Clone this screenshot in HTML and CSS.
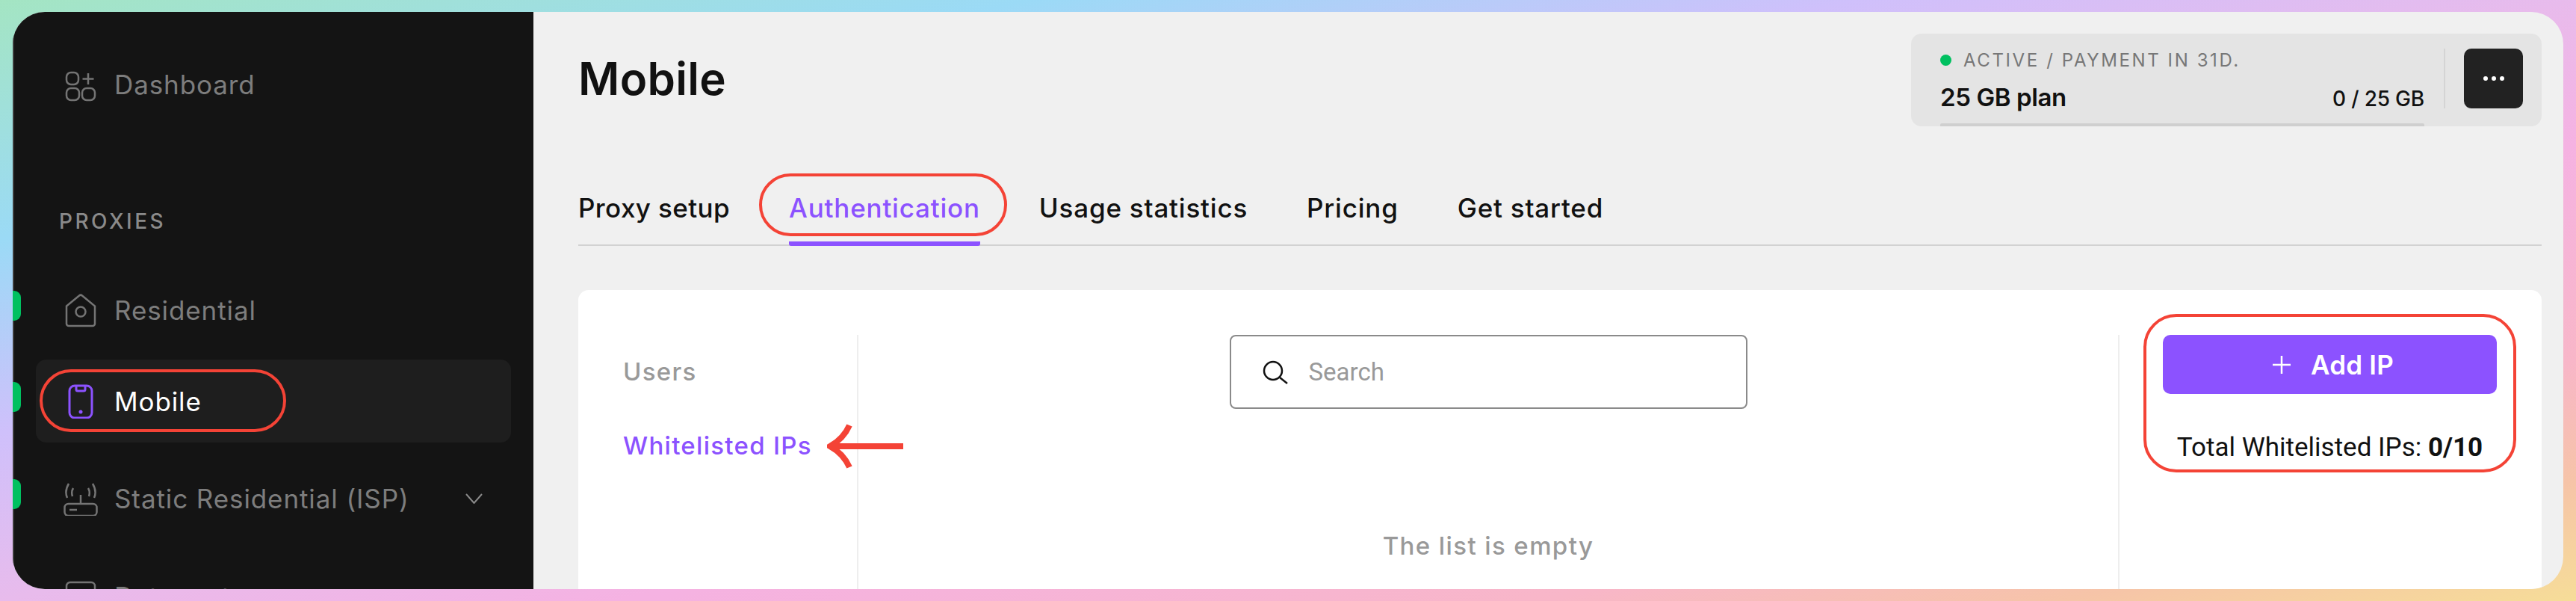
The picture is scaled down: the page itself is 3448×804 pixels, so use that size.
FILE: index.html
```html
<!DOCTYPE html>
<html lang="en">
<head>
    <meta charset="UTF-8">
    <title>Mobile</title>
    <link rel="stylesheet" href="styles.css">
</head>
<body>
    <div class="frame">
        <div class="app">
            <aside class="sidebar">
                <a class="nav-item nav-first">
                    <svg class="nav-icon" viewBox="0 0 46 46"><rect x="4" y="7" width="16" height="16" rx="6"/><path d="M33 8V23M25.500 15.500H40.500"/><rect x="4" y="28" width="17" height="16" rx="6"/><rect x="25" y="28" width="17" height="16" rx="6"/></svg>
                    <span>Dashboard</span>
                </a>
                <div class="nav-heading">PROXIES</div>
                <a class="nav-item">
                    <span class="nav-mark"></span>
                    <svg class="nav-icon" viewBox="0 0 46 46"><path d="M4 17.500L21 3.500a3 3 0 0 1 4 0L42 17.500V41a3 3 0 0 1-3 3H7a3 3 0 0 1-3-3Z"/><circle cx="23" cy="25" r="6.500"/></svg>
                    <span>Residential</span>
                </a>
                <a class="nav-item nav-active">
                    <span class="nav-mark"></span>
                    <svg class="nav-icon" viewBox="0 0 46 46"><rect x="8" y="2" width="30" height="43" rx="7"/><path d="M17 2V7a2 2 0 0 0 2 2H27a2 2 0 0 0 2-2V2"/><circle class="icon-dot" cx="23" cy="37" r="2.500"/></svg>
                    <span>Mobile</span>
                    <span class="ring ring-nav"></span>
                </a>
                <a class="nav-item nav-isp">
                    <span class="nav-mark"></span>
                    <svg class="nav-icon" viewBox="0 0 46 46"><rect x="1.500" y="30" width="43" height="16" rx="5"/><path d="M8 38H18M23 18V30M7 3Q1 13 5 22M39 3Q45 13 41 22M13 9Q10 14 12 20M33 9Q36 14 34 20"/></svg>
                    <span>Static Residential (ISP)</span>
                    <svg class="nav-chevron" viewBox="0 0 23 14"><path d="M1 1L11.500 13L22 1"/></svg>
                </a>
                <a class="nav-item nav-last">
                    <svg class="nav-icon" viewBox="0 0 46 46"><rect x="4" y="4" width="38" height="38" rx="5"/></svg>
                    <span>Datacenter</span>
                </a>
            </aside>

            <main class="main">
                <header class="page-header">
                    <h1>Mobile</h1>
                    <div class="plan-card">
                        <div class="plan-info">
                            <div class="plan-status"><span class="status-dot"></span>ACTIVE / PAYMENT IN 31D.</div>
                            <div class="plan-row">
                                <span class="plan-name">25 GB plan</span>
                                <span class="plan-usage">0 / 25 GB</span>
                            </div>
                            <div class="plan-bar"></div>
                        </div>
                        <span class="plan-divider"></span>
                        <button class="plan-more"><i></i><i></i><i></i></button>
                    </div>
                </header>

                <nav class="tabs">
                    <a class="tab">Proxy setup</a>
                    <a class="tab tab-active">Authentication<span class="ring ring-tab"></span></a>
                    <a class="tab">Usage statistics</a>
                    <a class="tab">Pricing</a>
                    <a class="tab">Get started</a>
                </nav>

                <section class="card">
                    <div class="card-menu">
                        <a class="menu-link">Users</a>
                        <a class="menu-link menu-active">Whitelisted IPs</a>
                        <svg class="red-arrow" viewBox="0 0 102 60"><path d="M30 2Q22 20 4 30Q22 40 30 58M6 30H102"/></svg>
                    </div>
                    <div class="card-list">
                        <label class="search">
                            <svg class="search-icon" viewBox="0 0 34 32"><circle cx="14" cy="14" r="12"/><path d="M23 23L33 31"/></svg>
                            <span>Search</span>
                        </label>
                        <p class="empty">The list is empty</p>
                    </div>
                    <div class="card-side">
                        <button class="add-btn">
                            <svg class="add-plus" viewBox="0 0 26 26"><path d="M13 1V25M1 13H25"/></svg>
                            Add IP
                        </button>
                        <p class="total">Total Whitelisted IPs: <b>0/10</b></p>
                        <span class="ring ring-side"></span>
                    </div>
                </section>
            </main>
        </div>
    </div>
</body>
</html>
```

FILE: styles.css
```css
:root {
    --purple: #8c52ff;
    --red: #f44336;
    --muted: #7d7d7d;
    --ink: #111111;
    --green: #00c060;
}

* {
    box-sizing: border-box;
}

html, body {
    margin: 0;
    height: 804px;
    overflow: hidden;
}

body {
    font-family: Inter, 'Noto Sans', sans-serif;
    color: var(--ink);
}

.frame {
    height: 804px;
    padding: 16px 17px;
    background: linear-gradient(to bottom right, #a4e5c3 0%, #9bdaf6 20%, #cfc0fb 36%, #e8bbec 50%, #f5b2e2 62%, #f8b6c8 80%, #f6c4a8 90%, #f6dd98 100%);
}

.app {
    display: flex;
    height: 772px;
    border-radius: 43px;
    overflow: hidden;
    background: #f0f0f0;
}

/* sidebar */
.sidebar {
    width: 697px;
    flex-shrink: 0;
    padding-top: 41px;
    background: #141414;
    border-left: 2px solid #3c3c3c;
}

.nav-item {
    position: relative;
    display: flex;
    align-items: center;
    gap: 22px;
    width: 636px;
    height: 111px;
    margin-left: 29px;
    padding: 0 38px 0 37px;
    border-radius: 14px;
    font-size: 35px;
    letter-spacing: 0.9px;
    color: var(--muted);
}

.nav-icon {
    width: 46px;
    height: 46px;
    flex-shrink: 0;
    fill: none;
    stroke: #747474;
    stroke-width: 2.500;
}

.nav-mark {
    position: absolute;
    left: -31px;
    top: 30px;
    width: 11px;
    height: 40px;
    border-radius: 0 9px 9px 0;
    background: var(--green);
}

.nav-heading {
    margin: 103px 0 0 60px;
    font-size: 28px;
    font-weight: 500;
    line-height: 50px;
    letter-spacing: 3.500px;
    color: #8a8a8a;
}

.nav-heading + .nav-item {
    margin-top: 38px;
}

.nav-active {
    margin-top: 11px;
    background: #1e1e1e;
    color: #ffffff;
}

.nav-active .nav-icon {
    stroke: var(--purple);
    stroke-width: 3;
}

.nav-active .icon-dot {
    fill: var(--purple);
    stroke: none;
}

.nav-isp {
    margin-top: 19px;
}

.nav-last {
    margin-top: 20px;
}

.nav-chevron {
    width: 23px;
    height: 14px;
    margin-left: auto;
    fill: none;
    stroke: #8a8a8a;
    stroke-width: 2;
}

/* red marks drawn over the screenshot */
.ring {
    position: absolute;
    border: 4px solid var(--red);
    border-radius: 42px;
    pointer-events: none;
}

.ring-nav {
    left: 5px;
    top: 13px;
    width: 330px;
    height: 84px;
}

.ring-tab {
    left: -40px;
    top: -14px;
    width: 332px;
    height: 84px;
}

.ring-side {
    left: 32px;
    top: -28px;
    width: 499px;
    height: 212px;
    border-radius: 44px;
}

.red-arrow {
    position: absolute;
    left: 333px;
    top: 119px;
    width: 102px;
    height: 60px;
    fill: none;
    stroke: var(--red);
    stroke-width: 8;
}

/* main column */
.main {
    flex: 1;
    min-width: 0;
    padding: 29px 29px 0 60px;
}

.page-header {
    display: flex;
    justify-content: space-between;
    height: 124px;
}

h1 {
    margin: 0;
    font-size: 60px;
    font-weight: 600;
    line-height: 120px;
    letter-spacing: 0.3px;
}

.plan-card {
    display: flex;
    width: 844px;
    height: 124px;
    padding: 0 25px 0 39px;
    border-radius: 14px;
    background: #e4e4e4;
}

.plan-info {
    display: flex;
    flex-direction: column;
    width: 648px;
}

.plan-status {
    display: flex;
    align-items: center;
    gap: 16px;
    height: 30px;
    margin-top: 20px;
    font-size: 24px;
    letter-spacing: 2.600px;
    color: #777777;
}

.status-dot {
    width: 15px;
    height: 15px;
    border-radius: 50%;
    background: var(--green);
}

.plan-row {
    display: flex;
    justify-content: space-between;
    align-items: baseline;
    height: 40px;
    margin-top: 15px;
}

.plan-name {
    font-size: 33px;
    font-weight: 600;
    letter-spacing: -0.4px;
}

.plan-usage {
    font-size: 28px;
    font-weight: 500;
    letter-spacing: -0.2px;
}

.plan-bar {
    height: 4px;
    margin-top: auto;
    border-radius: 2px 2px 0 0;
    background: #cfcfcf;
}

.plan-divider {
    width: 2px;
    height: 80px;
    margin: 20px 0 0 26px;
    background: #d4d4d4;
}

.plan-more {
    display: flex;
    align-items: center;
    justify-content: center;
    gap: 5px;
    width: 79px;
    height: 80px;
    margin: 20px 0 0 25px;
    padding: 0;
    border: none;
    border-radius: 10px;
    background: #222222;
}

.plan-more i {
    width: 6px;
    height: 6px;
    border-radius: 50%;
    background: #ffffff;
}

/* tabs */
.tabs {
    display: flex;
    gap: 79px;
    height: 97px;
    margin-top: 63px;
    padding-top: 14px;
    border-bottom: 2px solid #d2d2d2;
}

.tab {
    position: relative;
    height: 83px;
    padding-top: 12px;
    border-bottom: 6px solid transparent;
    font-size: 35px;
    font-weight: 500;
    line-height: 40px;
    letter-spacing: 0.8px;
}

.tab:first-child {
    letter-spacing: 0.4px;
}

.tab-active {
    color: var(--purple);
    border-bottom-color: var(--purple);
    border-radius: 0 0 3px 3px;
}

/* card */
.card {
    display: grid;
    grid-template-columns: 373px 1fr 567px;
    height: 420px;
    margin-top: 59px;
    padding-top: 60px;
    border-radius: 14px;
    background: #ffffff;
}

.card-menu {
    position: relative;
    padding-left: 60px;
    font-size: 33px;
    font-weight: 500;
    letter-spacing: 1.300px;
}

.menu-link {
    display: block;
    height: 99px;
    line-height: 98px;
    color: #999999;
}

.menu-active {
    color: var(--purple);
}

.card-list {
    display: flex;
    flex-direction: column;
    align-items: center;
    border-left: 2px solid #eeeeee;
}

.search {
    display: flex;
    align-items: center;
    gap: 28px;
    width: 693px;
    height: 99px;
    padding-left: 42px;
    border: 2px solid #8a8a8a;
    border-radius: 8px;
    font-family: Roboto, sans-serif;
    font-size: 33px;
    color: #999999;
}

.search-icon {
    width: 34px;
    height: 32px;
    fill: none;
    stroke: #111111;
    stroke-width: 2.500;
}

.empty {
    margin: 150px 0 0;
    font-size: 33px;
    font-weight: 500;
    line-height: 66px;
    letter-spacing: 1.400px;
    color: #999999;
}

.card-side {
    position: relative;
    padding: 0 60px 0 58px;
    border-left: 2px solid #eeeeee;
}

.add-btn {
    display: flex;
    align-items: center;
    justify-content: center;
    gap: 26px;
    width: 100%;
    height: 79px;
    padding: 0 0 0 8px;
    border: none;
    border-radius: 10px;
    background: var(--purple);
    color: #ffffff;
    font-family: Inter, sans-serif;
    font-size: 35px;
    font-weight: 600;
    letter-spacing: 0.2px;
}

.add-plus {
    width: 26px;
    height: 26px;
    fill: none;
    stroke: #ffffff;
    stroke-width: 2.500;
}

.total {
    margin: 50px 0 0;
    font-family: Roboto, sans-serif;
    font-size: 35px;
    line-height: 44px;
    text-align: center;
    white-space: nowrap;
}
```
